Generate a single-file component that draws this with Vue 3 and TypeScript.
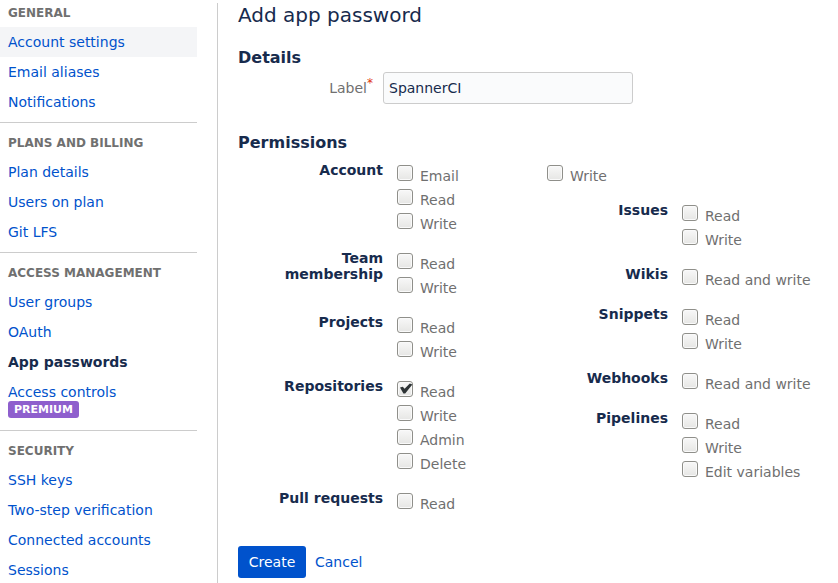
<script setup lang="ts">
import { reactive, ref } from 'vue'

interface NavItem {
  label: string
  active?: boolean
  highlighted?: boolean
  badge?: string
}

interface NavSection {
  title: string
  items: NavItem[]
}

interface Permission {
  id: string
  label: string
}

interface PermissionGroup {
  id: string
  title?: string
  options: Permission[]
}

const sections: NavSection[] = [
  {
    title: 'General',
    items: [
      { label: 'Account settings', highlighted: true },
      { label: 'Email aliases' },
      { label: 'Notifications' },
    ],
  },
  {
    title: 'Plans and billing',
    items: [{ label: 'Plan details' }, { label: 'Users on plan' }, { label: 'Git LFS' }],
  },
  {
    title: 'Access management',
    items: [
      { label: 'User groups' },
      { label: 'OAuth' },
      { label: 'App passwords', active: true },
      { label: 'Access controls', badge: 'Premium' },
    ],
  },
  {
    title: 'Security',
    items: [
      { label: 'SSH keys' },
      { label: 'Two-step verification' },
      { label: 'Connected accounts' },
      { label: 'Sessions' },
    ],
  },
]

function group(id: string, title: string | undefined, labels: string[]): PermissionGroup {
  return {
    id,
    title,
    options: labels.map((label) => ({
      id: `${id}-${label.toLowerCase().replace(/ /g, '-')}`,
      label,
    })),
  }
}

const columns: PermissionGroup[][] = [
  [
    group('account', 'Account', ['Email', 'Read', 'Write']),
    group('team', 'Team membership', ['Read', 'Write']),
    group('project', 'Projects', ['Read', 'Write']),
    group('repository', 'Repositories', ['Read', 'Write', 'Admin', 'Delete']),
    group('pullrequest', 'Pull requests', ['Read']),
  ],
  [
    group('pullrequest', undefined, ['Write']),
    group('issue', 'Issues', ['Read', 'Write']),
    group('wiki', 'Wikis', ['Read and write']),
    group('snippet', 'Snippets', ['Read', 'Write']),
    group('webhook', 'Webhooks', ['Read and write']),
    group('pipeline', 'Pipelines', ['Read', 'Write', 'Edit variables']),
  ],
]

const name = ref('SpannerCI')
const granted = reactive<Record<string, boolean>>({ 'repository-read': true })
</script>

<template>
  <div class="page">
    <nav class="sidebar">
      <section v-for="section in sections" :key="section.title" class="nav-section">
        <h2 class="nav-title">{{ section.title }}</h2>
        <ul class="nav-list">
          <li v-for="item in section.items" :key="item.label">
            <a
              href="#"
              class="nav-link"
              :class="{ active: item.active, highlighted: item.highlighted }"
            >
              <span>{{ item.label }}</span>
              <span v-if="item.badge" class="badge-line"><span class="badge">{{ item.badge }}</span></span>
            </a>
          </li>
        </ul>
      </section>
    </nav>

    <main class="content">
      <h1 class="title">Add app password</h1>
      <form @submit.prevent>
        <h3 class="subtitle">Details</h3>
        <div class="field">
          <label class="field-label" for="label">Label<span class="required">*</span></label>
          <input id="label" v-model="name" class="text-input" type="text" />
        </div>

        <h3 class="subtitle permissions-title">Permissions</h3>
        <div class="columns">
          <div v-for="(column, index) in columns" :key="index" class="column">
            <div
              v-for="entry in column"
              :key="entry.id"
              class="group"
              :class="{ continued: !entry.title }"
              role="group"
              :aria-labelledby="`${entry.id}-title`"
            >
              <div v-if="entry.title" :id="`${entry.id}-title`" class="group-title">{{ entry.title }}</div>
              <div class="options">
                <div v-for="option in entry.options" :key="option.id" class="option">
                  <span class="tick-box">
                    <input :id="option.id" v-model="granted[option.id]" class="tick-input" type="checkbox" />
                    <svg v-if="granted[option.id]" class="tick" viewBox="0 0 16 16" aria-hidden="true">
                      <path d="M3 6.6 L5.8 5.8 L7.6 7.8 L12.8 2.4 L15.4 3.4 L8.2 12.6 L6.4 12.6 Z" />
                    </svg>
                  </span>
                  <label :for="option.id">{{ option.label }}</label>
                </div>
              </div>
            </div>
          </div>
        </div>

        <div class="actions">
          <button class="primary" type="submit">Create</button>
          <a class="cancel" href="#">Cancel</a>
        </div>
      </form>
    </main>
  </div>
</template>

<style>
body {
  background: #fff;
}
</style>

<style scoped>
.page {
  display: grid;
  grid-template-columns: 197px minmax(0, 1fr);
  column-gap: 20px;
  padding-top: 3px;
  font: 14px/20px 'DejaVu Sans', sans-serif;
  color: #172b4d;
}

a {
  color: #0052cc;
  text-decoration: none;
}

a:hover {
  text-decoration: underline;
}

h1,
h2,
h3,
ul {
  margin: 0;
  padding: 0;
}

.nav-section + .nav-section {
  margin-top: 5px;
  padding-top: 10px;
  border-top: 1px solid #ccc;
}

.nav-title {
  padding: 0 8px 4px;
  font-size: 12px;
  line-height: 20px;
  color: #707070;
  text-transform: uppercase;
}

.nav-list {
  list-style: none;
}

.nav-link {
  display: block;
  padding: 5px 8px;
}

.nav-link.highlighted {
  background: #f4f5f7;
}

.nav-link.active {
  font-weight: bold;
  color: #172b4d;
}

.badge-line {
  display: flex;
  height: 18px;
  align-items: flex-start;
  margin-top: -1px;
  padding-bottom: 1px;
}

.badge {
  padding: 0 6px;
  border-radius: 3px;
  background: #8e5fcd;
  color: #fff;
  font-size: 11px;
  font-weight: bold;
  line-height: 17px;
  text-transform: uppercase;
}

.content {
  padding: 0 30px 5px 20px;
  border-left: 1px solid #ccc;
}

.title {
  font-size: 20px;
  font-weight: normal;
  line-height: 24px;
}

.subtitle {
  margin-top: 20px;
  font-size: 16px;
  line-height: 22px;
}

.field {
  display: flex;
  margin-top: 3px;
}

.field-label {
  box-sizing: border-box;
  width: 145px;
  padding: 5px 10px 0 0;
  color: #707070;
  text-align: right;
}

.required {
  color: #de350b;
  font-size: 12px;
  line-height: 1;
  vertical-align: 6px;
}

.text-input {
  box-sizing: border-box;
  width: 250px;
  height: 32px;
  padding: 0 5px;
  border: 1px solid #ccc;
  border-radius: 3px;
  background: #fafbfc;
  color: #172b4d;
  font: inherit;
}

.permissions-title {
  margin-top: 28px;
}

.columns {
  display: grid;
  grid-template-columns: repeat(2, minmax(0, 1fr));
  margin-top: 8px;
}

.column {
  display: flex;
  flex-direction: column;
  gap: 14px;
}

.group {
  display: flex;
  gap: 14px;
}

.group.continued {
  padding-left: 24px;
}

.group-title {
  box-sizing: border-box;
  flex: none;
  width: 145px;
  padding-left: 20px;
  font-weight: bold;
  line-height: 16px;
  text-align: right;
}

.options {
  padding-top: 2px;
}

.option {
  display: flex;
  gap: 7px;
  color: #707070;
  line-height: 24px;
  white-space: nowrap;
}

.tick-box {
  position: relative;
  width: 16px;
  height: 16px;
  margin-top: 1px;
}

.tick-input {
  display: block;
  box-sizing: border-box;
  width: 16px;
  height: 16px;
  margin: 0;
  border: 1px solid #8f8f8a;
  border-radius: 3px;
  background: linear-gradient(#f8f8f8, #e6e6e4);
  box-shadow: inset 0 0 0 1px #fafafa;
  appearance: none;
}

.tick {
  position: absolute;
  inset: 0;
  width: 16px;
  height: 16px;
  fill: #2e3436;
  pointer-events: none;
}

.actions {
  display: flex;
  align-items: center;
  gap: 9px;
  margin-top: 30px;
}

.primary {
  min-width: 68px;
  height: 32px;
  padding: 0 10px;
  border: 0;
  border-radius: 3px;
  background: #0052cc;
  color: #fff;
  font: inherit;
}
</style>
